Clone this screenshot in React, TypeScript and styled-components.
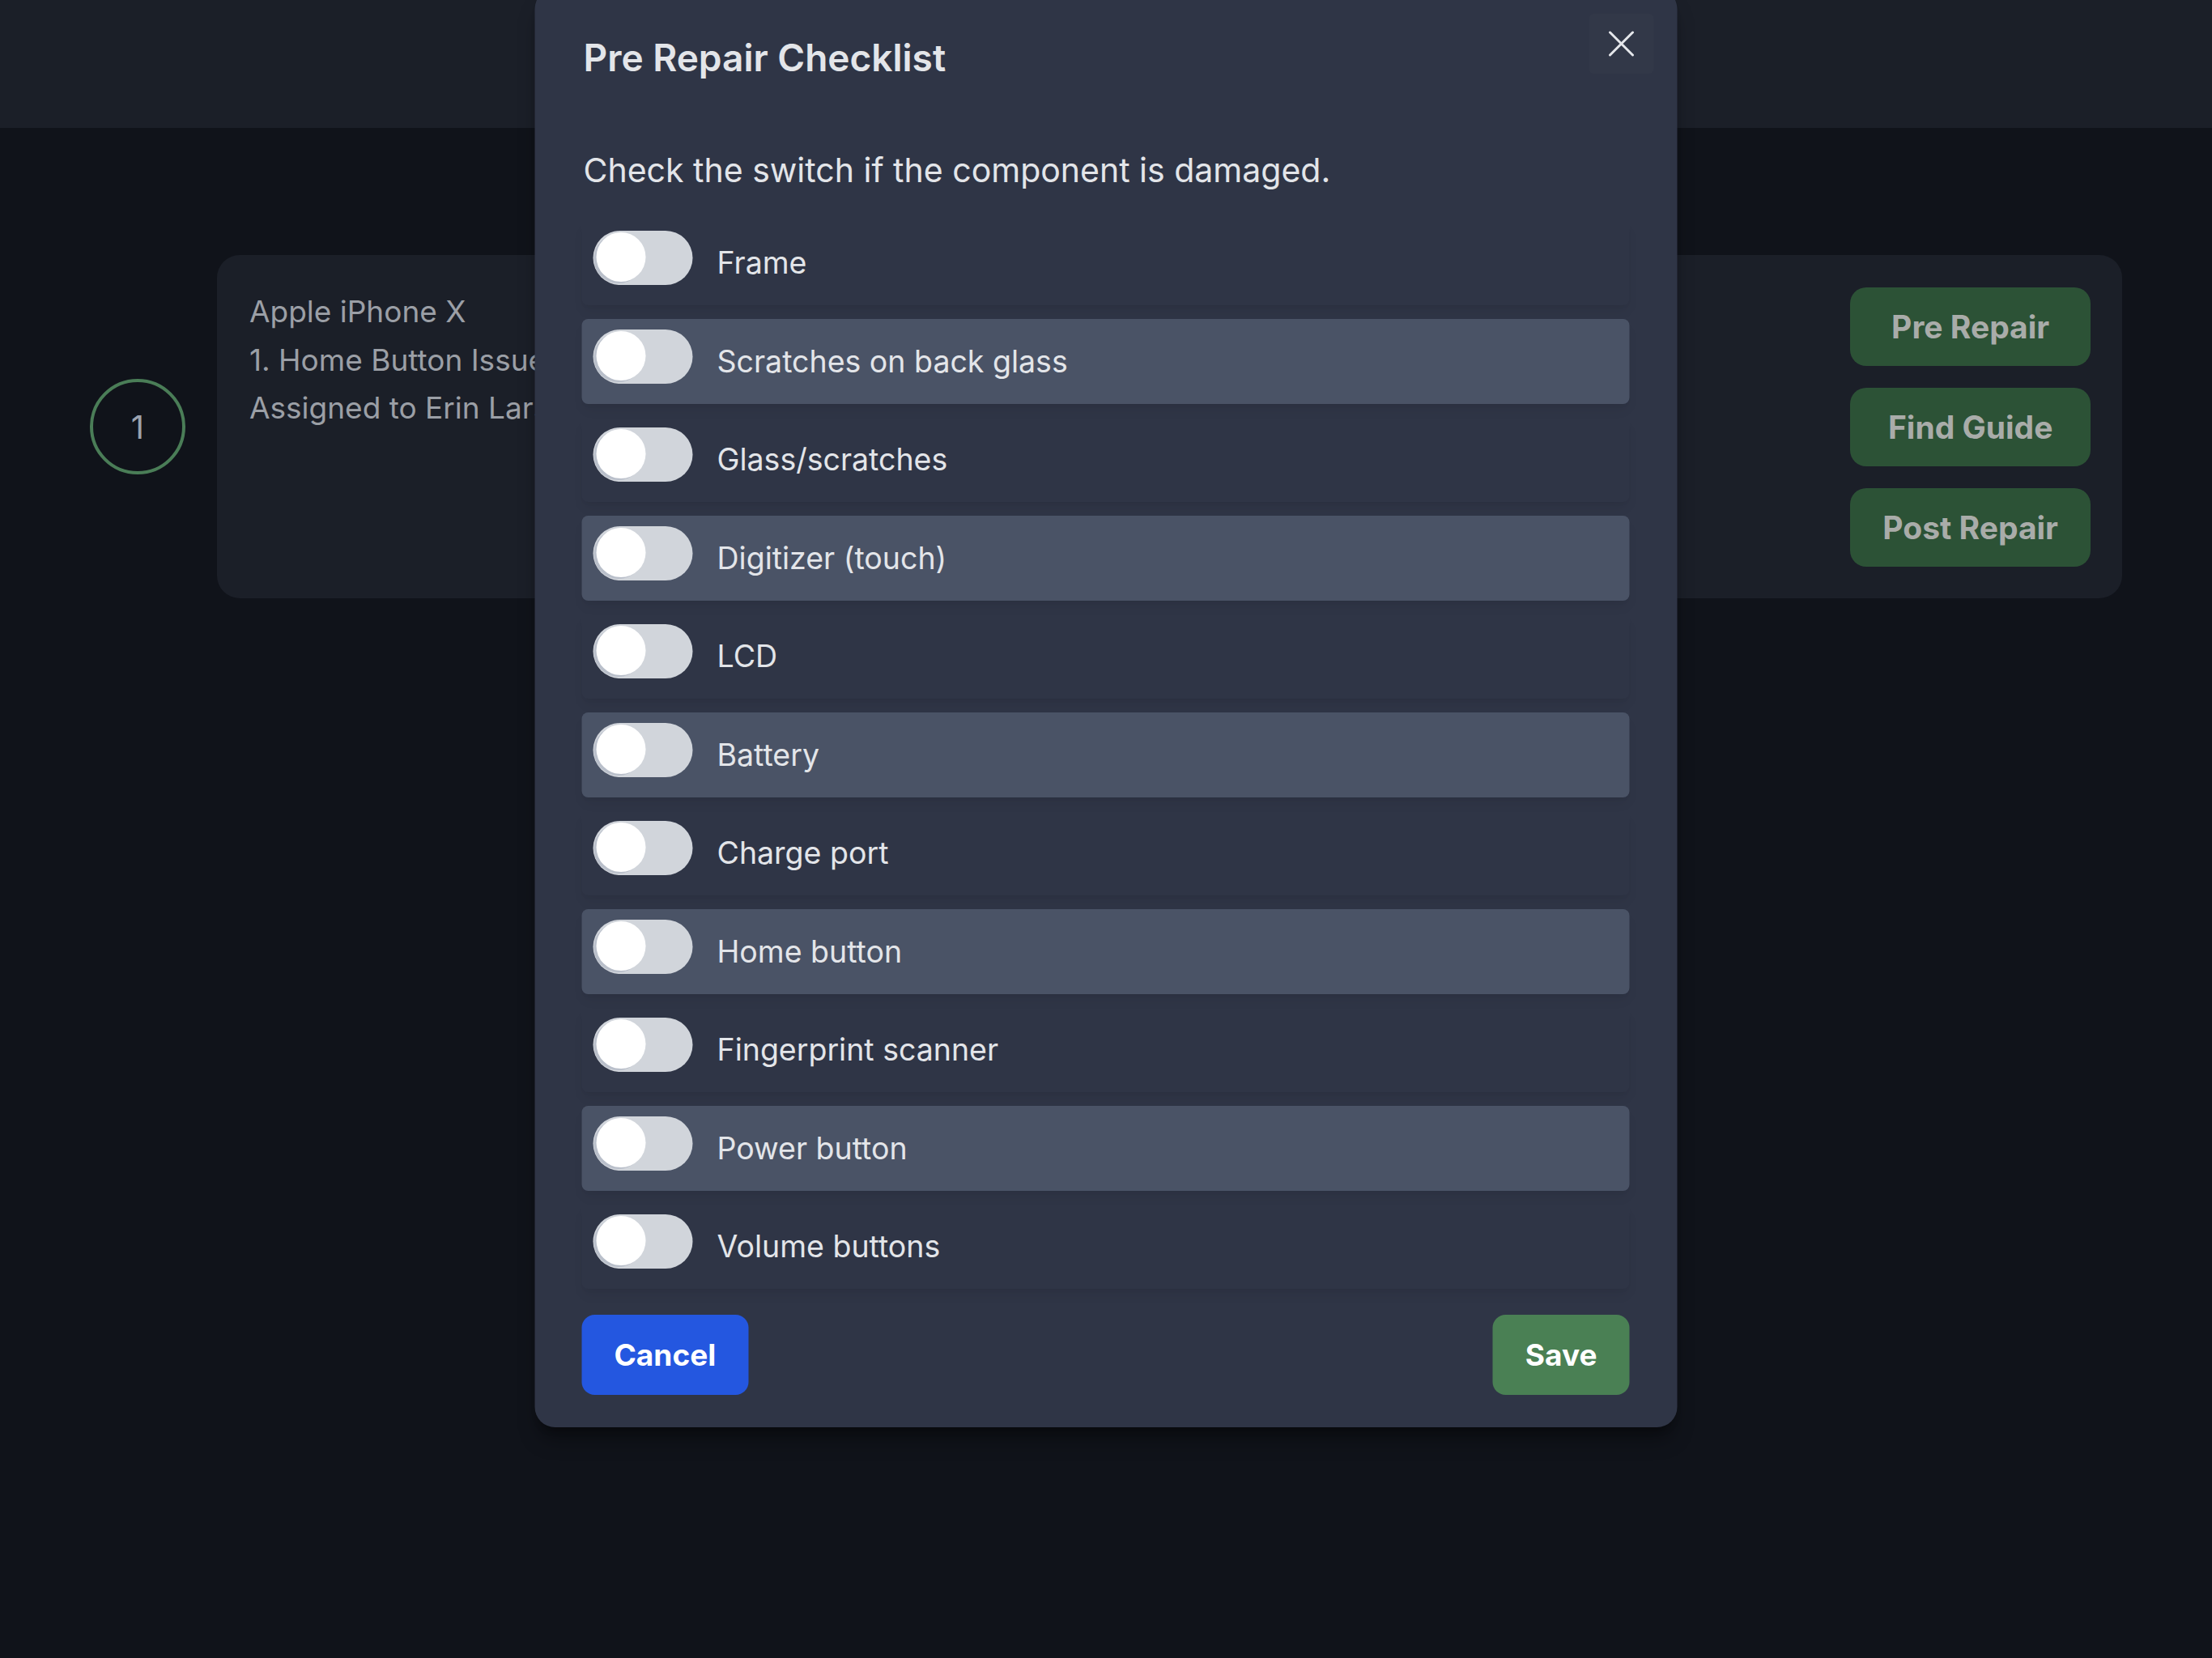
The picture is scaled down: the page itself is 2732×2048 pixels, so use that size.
import React from 'react';
import styled, { createGlobalStyle } from 'styled-components';

const Global = createGlobalStyle`
  html, body { margin: 0; padding: 0; background: #10131a; }
  body { font-family: Inter, "Noto Sans", sans-serif; }
  * { box-sizing: border-box; }
`;

const Page = styled.div`
  position: relative;
  width: 2732px;
  height: 2048px;
  background: #10131a;
  overflow: hidden;
`;

const TopBar = styled.header`
  height: 158px;
  background: #1b1f28;
`;

const Main = styled.main`
  display: flex;
  align-items: center;
  gap: 39px;
  padding: 157px 111px 0 111px;
`;

const StepCircle = styled.div`
  flex-shrink: 0;
  width: 118px;
  height: 118px;
  border-radius: 50%;
  border: 4px solid #4a7d57;
  display: flex;
  align-items: center;
  justify-content: center;
  color: #9ca3af;
  font-size: 40px;
`;

const Card = styled.section`
  flex: 1;
  height: 424px;
  background: #1b1f28;
  border-radius: 28px;
  padding: 40px 39px 39px 40px;
  display: flex;
  justify-content: space-between;
  align-items: flex-start;
`;

const Info = styled.div`
  display: flex;
  flex-direction: column;
  color: #9b9fa6;
  font-size: 37px;
  line-height: 59.5px;
`;

const Actions = styled.div`
  display: flex;
  flex-direction: column;
  gap: 27px;
`;

const ActionButton = styled.button`
  height: 97px;
  padding: 0 40px;
  border: none;
  border-radius: 20px;
  background: #2c5236;
  color: #a9aca9;
  font-family: Inter, sans-serif;
  font-weight: 700;
  font-size: 39px;
`;

const Modal = styled.div`
  position: absolute;
  top: -14px;
  left: 50%;
  transform: translateX(-50%);
  width: 1411px;
  background: #2f3546;
  border-radius: 25px;
  padding: 57px 59px 40px 58px;
  box-shadow: 0 20px 25px -5px rgba(0, 0, 0, 0.35), 0 8px 10px -6px rgba(0, 0, 0, 0.3);
`;

const Title = styled.h2`
  margin: 0;
  padding-left: 2px;
  font-weight: 600;
  font-size: 46px;
  line-height: 56px;
  color: #e3e5e9;
`;

const CloseButton = styled.button`
  position: absolute;
  top: 31px;
  right: 29px;
  width: 80px;
  height: 74px;
  border: none;
  border-radius: 6px;
  background: rgba(255, 255, 255, 0.015);
  display: flex;
  align-items: center;
  justify-content: center;
  padding: 0;
`;

const Description = styled.p`
  margin: 85px 0 0;
  padding-left: 2px;
  font-size: 41px;
  line-height: 52px;
  color: #e3e5e9;
`;

const List = styled.ul`
  list-style: none;
  margin: 36px 0 0;
  padding: 0;
  display: flex;
  flex-direction: column;
  gap: 16.5px;
`;

const Row = styled.li<{ $shaded: boolean }>`
  height: 105px;
  display: flex;
  align-items: center;
  gap: 30px;
  padding-left: 14px;
  border-radius: 8px;
  background: ${(p) => (p.$shaded ? '#4a5366' : 'transparent')};
  box-shadow: 0 10px 15px -3px rgba(0, 0, 0, 0.06), 0 4px 6px -4px rgba(0, 0, 0, 0.06);
`;

const Track = styled.span`
  position: relative;
  flex-shrink: 0;
  width: 123px;
  height: 67px;
  margin-bottom: 12px;
  border-radius: 34px;
  background: #d1d5db;
`;

const Knob = styled.span`
  position: absolute;
  left: 4px;
  top: 2px;
  width: 61px;
  height: 61px;
  border-radius: 50%;
  background: #ffffff;
  box-shadow: -3px 2px 0 0 #b9bfca;
`;

const Label = styled.span`
  font-size: 37.5px;
  color: #e3e5e9;
`;

const Footer = styled.div`
  margin-top: 32px;
  display: flex;
  justify-content: space-between;
`;

const FooterButton = styled.button<{ $tone: 'blue' | 'green' }>`
  height: 99px;
  padding: 0 40px;
  border: none;
  border-radius: 16px;
  background: ${(p) => (p.$tone === 'blue' ? '#2457e0' : '#4a8054')};
  color: #ffffff;
  font-family: Inter, sans-serif;
  font-weight: 700;
  font-size: 37px;
`;

const items = [
  'Frame',
  'Scratches on back glass',
  'Glass/scratches',
  'Digitizer (touch)',
  'LCD',
  'Battery',
  'Charge port',
  'Home button',
  'Fingerprint scanner',
  'Power button',
  'Volume buttons',
];

export default function App() {
  return (
    <Page>
      <Global />
      <TopBar />
      <Main>
        <StepCircle>1</StepCircle>
        <Card>
          <Info>
            <span>Apple iPhone X</span>
            <span>1. Home Button Issue</span>
            <span>Assigned to Erin Larson</span>
          </Info>
          <Actions>
            <ActionButton>Pre Repair</ActionButton>
            <ActionButton>Find Guide</ActionButton>
            <ActionButton>Post Repair</ActionButton>
          </Actions>
        </Card>
      </Main>
      <Modal role="dialog">
        <Title>Pre Repair Checklist</Title>
        <CloseButton aria-label="Close">
          <svg width="32" height="32" viewBox="0 0 32 32">
            <path d="M2 2 L30 30 M30 2 L2 30" stroke="#e5e7eb" strokeWidth="3" strokeLinecap="round" />
          </svg>
        </CloseButton>
        <Description>Check the switch if the component is damaged.</Description>
        <List>
          {items.map((item, i) => (
            <Row key={item} $shaded={i % 2 === 1}>
              <Track role="switch" aria-checked="false">
                <Knob />
              </Track>
              <Label>{item}</Label>
            </Row>
          ))}
        </List>
        <Footer>
          <FooterButton $tone="blue">Cancel</FooterButton>
          <FooterButton $tone="green">Save</FooterButton>
        </Footer>
      </Modal>
    </Page>
  );
}
